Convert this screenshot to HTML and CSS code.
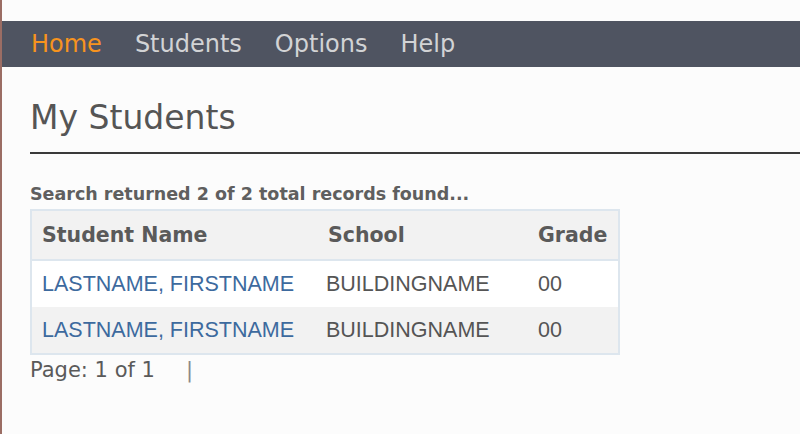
FILE: index.html
```html
<!DOCTYPE html>
<html lang="en">
<head>
    <meta charset="UTF-8">
    <meta name="viewport" content="width=device-width, initial-scale=1.0">
    <title>My Students</title>
    <link rel="stylesheet" href="styles.css">
</head>
<body>
    <div class="top-gap"></div>
    <nav class="navbar">
        <a href="#" class="nav-link active">Home</a>
        <a href="#" class="nav-link">Students</a>
        <a href="#" class="nav-link">Options</a>
        <a href="#" class="nav-link">Help</a>
    </nav>

    <div class="content">
        <h1 class="page-title">My Students</h1>
        <hr class="title-rule">

        <p class="search-summary">Search returned 2 of 2 total records found...</p>

        <table class="students-table">
            <thead>
                <tr>
                    <th class="col-name">Student Name</th>
                    <th class="col-school">School</th>
                    <th class="col-grade">Grade</th>
                </tr>
            </thead>
            <tbody>
                <tr>
                    <td><a href="#" class="student-link">LASTNAME, FIRSTNAME</a></td>
                    <td>BUILDINGNAME</td>
                    <td>00</td>
                </tr>
                <tr class="alt">
                    <td><a href="#" class="student-link">LASTNAME, FIRSTNAME</a></td>
                    <td>BUILDINGNAME</td>
                    <td>00</td>
                </tr>
            </tbody>
        </table>

        <div class="pager">
            <span>Page: 1 of 1</span>
            <span class="pager-sep">|</span>
        </div>
    </div>
</body>
</html>
```

FILE: styles.css
```css
* {
    margin: 0;
    padding: 0;
    box-sizing: border-box;
}

body {
    font-family: 'DejaVu Sans', Verdana, sans-serif;
    background: #fcfcfc;
    color: #555555;
    border-left: 2px solid #9b6d64;
    min-height: 434px;
}

.top-gap {
    height: 21px;
}

.navbar {
    background: #4f5461;
    height: 46px;
    display: flex;
    align-items: center;
    gap: 33px;
    padding-left: 29px;
}

.nav-link {
    font-size: 24px;
    color: #d2d3d5;
    text-decoration: none;
}

.nav-link.active {
    color: #f7931e;
}

.content {
    padding: 0 0 0 28px;
}

.page-title {
    font-size: 33px;
    font-weight: normal;
    color: #555555;
    margin-top: 31px;
    line-height: 40px;
}

.title-rule {
    border: none;
    border-top: 2px solid #3a3a3a;
    margin-top: 14px;
}

.search-summary {
    font-size: 17.5px;
    font-weight: bold;
    color: #5f5f5f;
    margin-top: 29px;
    line-height: 22px;
    margin-bottom: 4px;
}

.students-table {
    border-collapse: collapse;
    border: 2px solid #dde6ee;
    width: 590px;
}

.students-table th {
    background: #f2f2f2;
    font-size: 20.5px;
    font-weight: bold;
    color: #5a5a5a;
    text-align: left;
    height: 50px;
    padding: 0 10px;
    border-bottom: 2px solid #dde6ee;
}

.students-table td {
    font-family: 'Liberation Sans', Arial, sans-serif;
    font-size: 21.5px;
    color: #555555;
    height: 47px;
    padding: 0 10px;
    background: #ffffff;
}

.students-table tr.alt td {
    background: #f2f2f2;
}

.col-name {
    width: 287px;
}

.col-school {
    width: 210px;
    padding-left: 12px;
}

.students-table td:nth-child(2) {
    padding-left: 8px;
}

.student-link {
    color: #3d6a9e;
    text-decoration: none;
}

.pager {
    font-size: 21px;
    color: #5a5a5a;
    margin-top: 2px;
    display: flex;
    gap: 31px;
    line-height: 26px;
}

.pager-sep {
    color: #888888;
}
```
